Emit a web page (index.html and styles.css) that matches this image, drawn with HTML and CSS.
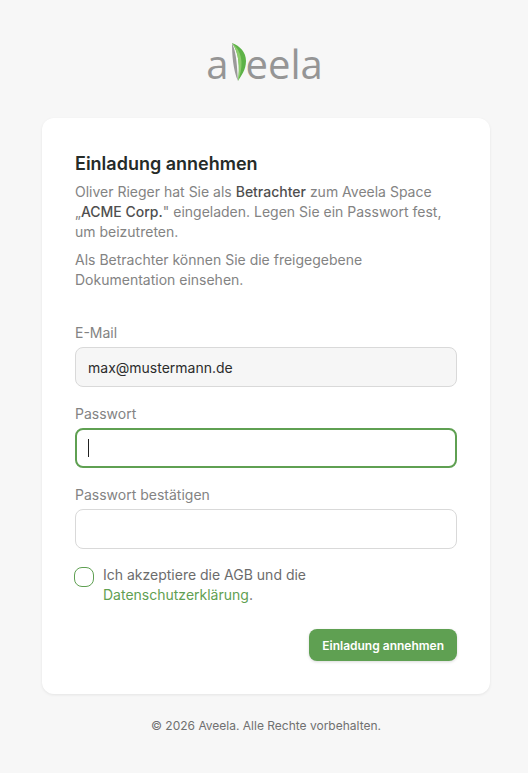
FILE: index.html
```html
<!DOCTYPE html>
<html lang="de">
<head>
    <meta charset="UTF-8">
    <meta name="viewport" content="width=device-width, initial-scale=1.0">
    <title>Einladung annehmen</title>
    <link rel="stylesheet" href="styles.css">
</head>
<body>

    <div class="logo">
        <span class="logo-a">a</span>
        <svg class="logo-leaf" width="20" height="40" viewBox="0 0 20 40">
            <path d="M3 1C3 12 4 28 9 39C8 26 8 12 3 1Z" fill="#9a9a9a"/>
            <path d="M3 1C11 4 17 10 17 19C17 28 12 34 9 39C11 26 10 10 3 1Z" fill="#5db247"/>
            <path d="M3 1C9 6 12 12 12.500 20C12.800 27 11 33 9 39C11 26 10 10 3 1Z" fill="#8ccc6c"/>
        </svg>
        <span class="logo-rest">eela</span>
    </div>

    <div class="card">
        <h2>Einladung annehmen</h2>
        <p class="intro">Oliver Rieger hat Sie als <b>Betrachter</b> zum Aveela Space „<b>ACME Corp.</b>" eingeladen. Legen Sie ein Passwort fest, um beizutreten.</p>
        <p class="intro">Als Betrachter können Sie die freigegebene Dokumentation einsehen.</p>

        <form class="invite-form">
            <label class="field">
                <span class="field-label">E-Mail</span>
                <span class="input-custom input-disabled">max@mustermann.de</span>
            </label>
            <label class="field">
                <span class="field-label">Passwort</span>
                <span class="input-custom input-focus"><span class="caret"></span></span>
            </label>
            <label class="field">
                <span class="field-label">Passwort bestätigen</span>
                <span class="input-custom"></span>
            </label>
            <div class="terms">
                <span class="check"></span>
                <span>Ich akzeptiere die AGB und die <a href="#">Datenschutzerklärung</a>.</span>
            </div>
            <div class="actions">
                <button type="button" class="submit-btn">Einladung annehmen</button>
            </div>
        </form>
    </div>

    <p class="footer">© 2026 Aveela. Alle Rechte vorbehalten.</p>

</body>
</html>
```

FILE: styles.css
```css
body {
    font-family: Inter, "Liberation Sans", sans-serif;
    background-color: #f7f7f7;
    margin: 0;
    padding: 34px 38px 0 42px;
    color: #838383;
}

.logo {
    display: flex;
    justify-content: center;
    align-items: flex-start;
    height: 84px;
    padding-right: 3px;
    font-family: "Open Sans", sans-serif;
    font-size: 40px;
    font-weight: 500;
    line-height: 60px;
    color: #959595;
}
.logo-a {
    margin-right: 1px;
}
.logo-leaf {
    margin-top: 8px;
}
.logo-rest {
    margin-left: -4px;
}

.card {
    background-color: #fff;
    border-radius: 12px;
    box-shadow: 0 1px 3px rgba(0, 0, 0, 0.08);
    padding: 33px;
    height: 510px;
}
.card h2 {
    margin: 0 0 5px;
    font-size: 18px;
    line-height: 26px;
    font-weight: 600;
    color: #252b28;
}
.intro {
    margin: 0 0 8px;
    font-size: 14px;
    line-height: 20px;
}
.intro b {
    font-weight: 500;
    color: #4f4f4f;
}

.invite-form {
    margin-top: 33px;
}
.field {
    display: block;
    margin-bottom: 17px;
}
.field-label {
    display: block;
    margin-bottom: 4px;
    font-size: 14px;
    line-height: 20px;
}
.input-custom {
    display: flex;
    align-items: center;
    box-sizing: border-box;
    height: 40px;
    padding: 0 12px;
    border: 1px solid #d9d9d9;
    border-radius: 8px;
    font-size: 14px;
    color: #2c2c2c;
}
.input-disabled {
    background-color: #f6f6f6;
}
.input-focus {
    border: 2px solid #5fa052;
    padding: 0 11px;
}
.caret {
    width: 1px;
    height: 18px;
    background-color: #222;
}

.terms {
    display: flex;
    gap: 9px;
    margin-top: -1px;
    font-size: 14px;
    line-height: 20px;
    color: #6c6c6c;
}
.terms span:last-child {
    width: 260px;
}
.terms a {
    color: #5fa052;
    text-decoration: none;
}
.check {
    flex: none;
    box-sizing: border-box;
    width: 20px;
    height: 20px;
    margin-top: 2px;
    margin-left: -1px;
    border: 1px solid #5fa052;
    border-radius: 8px;
}

.actions {
    display: flex;
    justify-content: flex-end;
    margin-top: 24px;
}
.submit-btn {
    height: 32px;
    padding: 0 13px;
    background-color: #5fa052;
    border: none;
    border-radius: 8px;
    box-shadow: 0 1px 3px rgba(0, 0, 0, 0.15);
    color: #fff;
    font-family: inherit;
    font-size: 12px;
    font-weight: 600;
}

.footer {
    margin: 24px 0 0;
    text-align: center;
    font-size: 12px;
    line-height: 16px;
    color: #707070;
}
```
